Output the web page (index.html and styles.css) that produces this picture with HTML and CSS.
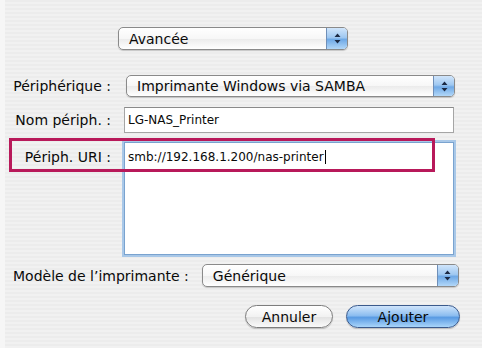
FILE: index.html
```html
<!DOCTYPE html>
<html lang="fr">
<head>
    <meta charset="UTF-8">
    <meta name="viewport" content="width=device-width, initial-scale=1.0">
    <title>Ajouter une imprimante</title>
    <link rel="stylesheet" href="styles.css">
</head>
<body>
    <div class="sheet">
        <div class="row-top">
            <div class="popup popup-mode">
                <span class="popup-text">Avancée</span>
                <span class="stepper">
                    <svg width="7" height="11" viewBox="0 0 7 11"><path d="M3.5 0.5 L6.5 4 L0.5 4 Z M3.5 10.5 L6.5 7 L0.5 7 Z" fill="#1c2a44"/></svg>
                </span>
            </div>
        </div>

        <div class="form">
            <label class="label">Périphérique :</label>
            <div class="popup popup-device">
                <span class="popup-text">Imprimante Windows via SAMBA</span>
                <span class="stepper">
                    <svg width="7" height="11" viewBox="0 0 7 11"><path d="M3.5 0.5 L6.5 4 L0.5 4 Z M3.5 10.5 L6.5 7 L0.5 7 Z" fill="#1c2a44"/></svg>
                </span>
            </div>

            <label class="label">Nom périph. :</label>
            <div class="field">LG-NAS_Printer</div>

            <label class="label label-top">Périph. URI :</label>
            <div class="field area">smb://192.168.1.200/nas-printer<span class="caret"></span></div>

            <!-- annotation drawn over the URI row -->
            <div class="highlight"></div>
        </div>

        <div class="row-model">
            <label class="label">Modèle de l’imprimante :</label>
            <div class="popup popup-model">
                <span class="popup-text">Générique</span>
                <span class="stepper">
                    <svg width="7" height="11" viewBox="0 0 7 11"><path d="M3.5 0.5 L6.5 4 L0.5 4 Z M3.5 10.5 L6.5 7 L0.5 7 Z" fill="#1c2a44"/></svg>
                </span>
            </div>
        </div>

        <div class="buttons">
            <button class="btn">Annuler</button>
            <button class="btn btn-default">Ajouter</button>
        </div>
    </div>
</body>
</html>
```

FILE: styles.css
```css
html, body {
    margin: 0;
    padding: 0;
}
body {
    width: 482px;
    height: 348px;
    overflow: hidden;
    font-family: "DejaVu Sans", "Liberation Sans", sans-serif;
    font-size: 14px;
    color: #0a0a0a;
    background-color: #ededed;
    background-image: repeating-linear-gradient(to bottom, #ececec 0, #ececec 2px, #f1f1f1 2px, #f1f1f1 4px);
}
.sheet {
    height: 348px;
    box-sizing: border-box;
    padding-top: 27px;
    border-left: 5px solid #f6f6f6;
}

/* popup menus */
.popup {
    display: flex;
    align-items: center;
    box-sizing: border-box;
    height: 23px;
    border: 1px solid #8a8a8a;
    border-radius: 5px;
    background: linear-gradient(to bottom, #ffffff 0%, #f7f7f7 50%, #ebebeb 51%, #ffffff 100%);
    box-shadow: 0 1px 1px rgba(0, 0, 0, 0.18);
    overflow: hidden;
}
.popup-text {
    flex: 1;
    padding-left: 10px;
    white-space: nowrap;
}
.stepper {
    width: 20px;
    height: 100%;
    display: flex;
    align-items: center;
    justify-content: center;
    border-left: 1px solid #6f8fb8;
    background: linear-gradient(to bottom, #d0e5fb 0%, #9fc8f1 45%, #6fa9e6 55%, #b2d7f8 100%);
}
.row-top {
    padding-left: 113px;
}
.popup-mode {
    width: 230px;
}

/* form grid */
.form {
    position: relative;
    margin-top: 25px;
    display: grid;
    grid-template-columns: 106px 330px;
    column-gap: 13px;
    row-gap: 10px;
    align-items: center;
}
.label {
    text-align: right;
    white-space: nowrap;
}
.label-top {
    align-self: start;
    padding-top: 6px;
}
.popup-device {
    width: 329px;
    height: 22px;
    margin-left: 2px;
}
.field {
    box-sizing: border-box;
    height: 26px;
    padding: 5px 3px;
    font-size: 12px;
    background: #fff;
    border: 1px solid #a5a5a5;
    border-top-color: #8a8a8a;
}
.area {
    height: 113px;
    margin-top: -1px;
    padding-top: 7px;
    border: 1px solid #7aa3cf;
    box-shadow: 0 0 0 2px #a9c8e8;
}
.caret {
    display: inline-block;
    width: 1px;
    height: 14px;
    margin-left: 1px;
    vertical-align: -3px;
    background: #000;
}
.highlight {
    position: absolute;
    left: 4px;
    top: 63px;
    width: 426px;
    height: 34px;
    box-sizing: border-box;
    border: 3px solid #b8195a;
}

/* model row */
.row-model {
    display: flex;
    align-items: center;
    margin-top: 9px;
    padding-left: 8px;
    gap: 13px;
}
.popup-model {
    width: 257px;
}

/* buttons */
.buttons {
    display: flex;
    justify-content: flex-end;
    gap: 13px;
    margin-top: 18px;
    padding-right: 22px;
}
.btn {
    box-sizing: border-box;
    height: 23px;
    width: 88px;
    font-family: inherit;
    font-size: 14px;
    color: #0a0a0a;
    border: 1px solid #7d7d7d;
    border-radius: 12px;
    background: linear-gradient(to bottom, #ffffff 0%, #f2f2f2 50%, #e2e2e2 52%, #fafafa 100%);
    box-shadow: 0 1px 1px rgba(0, 0, 0, 0.2);
}
.btn-default {
    width: 114px;
    border-color: #3b5a8c;
    background: linear-gradient(to bottom, #cfe4fb 0%, #8dbef0 45%, #5a9be3 55%, #a9d5fa 100%);
}
```
